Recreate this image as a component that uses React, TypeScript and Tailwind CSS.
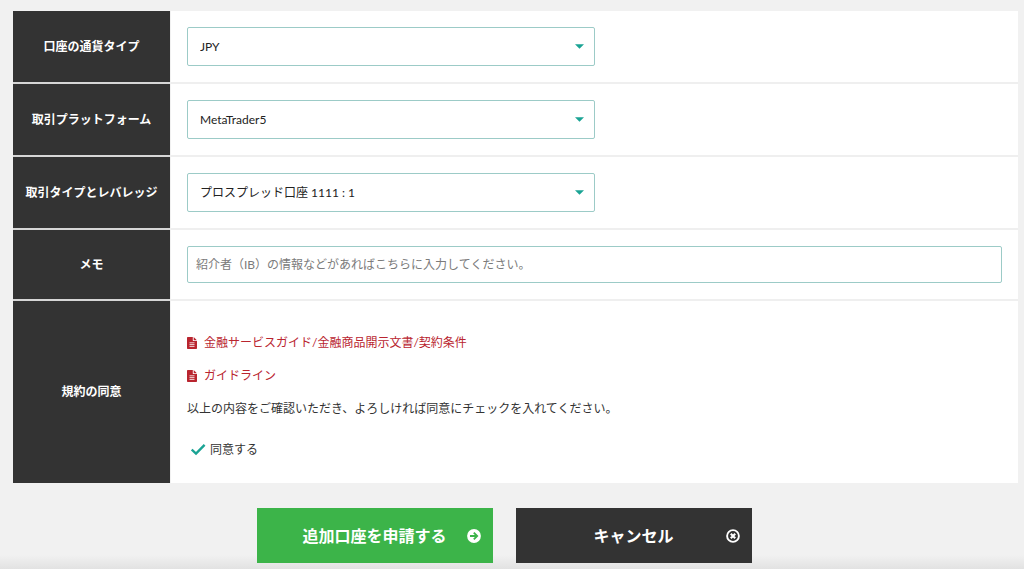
import { useState, type ReactNode } from "react";

type FormRowProps = {
  label: string;
  htmlFor?: string;
  children: ReactNode;
};

type SelectFieldProps = {
  id: string;
  options: string[];
};

const documents = [
  "金融サービスガイド/金融商品開示文書/契約条件",
  "ガイドライン",
];

function FormRow({ label, htmlFor, children }: FormRowProps) {
  return (
    <div className="flex gap-px">
      <div className="flex w-[157px] shrink-0 items-center justify-center bg-[#333333] text-center font-bold text-white">
        <label htmlFor={htmlFor}>{label}</label>
      </div>
      <div className="min-w-0 flex-1 bg-white px-4">{children}</div>
    </div>
  );
}

function Divider() {
  return (
    <div className="flex h-0.5 gap-px">
      <div className="w-[157px] shrink-0 bg-[#d6d6d6]" />
      <div className="flex-1 bg-[#efefef]" />
    </div>
  );
}

function SelectField({ id, options }: SelectFieldProps) {
  return (
    <div className="relative my-4 w-full max-w-[408px]">
      <select
        id={id}
        className="block h-[39px] w-full appearance-none rounded-xs border border-[#9ccbc7] bg-white px-3 text-[#222222] outline-none"
      >
        {options.map((option) => (
          <option key={option}>{option}</option>
        ))}
      </select>
      <svg
        viewBox="0 0 10 5"
        className="pointer-events-none absolute top-[17px] right-[11px] h-[5px] w-[9px] fill-[#1aa394]"
      >
        <path d="M0 0h10L5 5z" />
      </svg>
    </div>
  );
}

function DocumentIcon() {
  return (
    <svg viewBox="0 0 10 12" className="h-3 w-[10px] shrink-0">
      <path
        fill="#b9252f"
        d="M.7 0H5.8v3.4c0 .4.3.7.7.7H10v7.2c0 .4-.3.7-.7.7H.7c-.4 0-.7-.3-.7-.7V.7C0 .3.3 0 .7 0zM6.7.1l3.2 3.1H6.7z"
      />
      <path
        stroke="#fff"
        strokeOpacity=".8"
        d="M2.5 5.8h5M2.5 7.6h5M2.5 9.4h5"
      />
    </svg>
  );
}

function ArrowCircleIcon() {
  return (
    <svg viewBox="0 0 14 14" className="absolute right-3 size-[14px]">
      <circle cx="7" cy="7" r="6.9" fill="#fff" />
      <path
        d="M3 7h7M6.8 3.6 10.2 7l-3.4 3.4"
        fill="none"
        stroke="#3cb449"
        strokeWidth="1.8"
      />
    </svg>
  );
}

function CloseCircleIcon() {
  return (
    <svg
      viewBox="0 0 14 14"
      className="absolute right-3 size-[14px]"
      fill="none"
      stroke="#fff"
    >
      <circle cx="7" cy="7" r="5.9" strokeWidth="1.9" />
      <path d="m4.8 4.8 4.4 4.4M9.2 4.8 4.8 9.2" strokeWidth="2.2" />
    </svg>
  );
}

export default function App() {
  const [agreed, setAgreed] = useState(true);

  return (
    <main className="min-h-screen bg-[linear-gradient(to_top,#e2e2e2,#f1f1f1_14px)] pt-[11px] pr-[6px] pb-[5px] pl-[13px] font-[Lato,'Noto_Sans_CJK_JP',sans-serif] text-xs text-[#333333]">
      <form onSubmit={(event) => event.preventDefault()}>
        <FormRow label="口座の通貨タイプ" htmlFor="currency">
          <SelectField id="currency" options={["JPY"]} />
        </FormRow>
        <Divider />
        <FormRow label="取引プラットフォーム" htmlFor="platform">
          <SelectField id="platform" options={["MetaTrader5"]} />
        </FormRow>
        <Divider />
        <FormRow label="取引タイプとレバレッジ" htmlFor="leverage">
          <SelectField id="leverage" options={["プロスプレッド口座 1111 : 1"]} />
        </FormRow>
        <Divider />
        <FormRow label="メモ" htmlFor="memo">
          <input
            id="memo"
            type="text"
            placeholder="紹介者（IB）の情報などがあればこちらに入力してください。"
            className="my-4 block h-[37px] w-full rounded-xs border border-[#9ccbc7] bg-white px-2 outline-none placeholder:text-[#7b7b7b]"
          />
        </FormRow>
        <Divider />
        <FormRow label="規約の同意" htmlFor="agree">
          <div className="pt-8 pb-[23px] leading-5">
            <div className="flex flex-col items-start gap-[13px]">
              {documents.map((name) => (
                <a
                  key={name}
                  href="#"
                  className="flex items-center gap-[7px] text-[#b9252f]"
                >
                  <DocumentIcon />
                  {name}
                </a>
              ))}
              <p>
                以上の内容をご確認いただき、よろしければ同意にチェックを入れてください。
              </p>
            </div>
            <label
              htmlFor="agree"
              className="mt-[21px] flex w-fit items-center gap-1 pl-1"
            >
              <span className="relative flex h-3 w-[15px]">
                <input
                  id="agree"
                  type="checkbox"
                  checked={agreed}
                  onChange={(event) => setAgreed(event.target.checked)}
                  className="h-3 w-[15px] appearance-none"
                />
                {agreed && (
                  <svg
                    viewBox="0 0 15 12"
                    className="pointer-events-none absolute inset-0"
                  >
                    <path
                      d="M.7 5.6 5 9.6 13.6.9"
                      fill="none"
                      stroke="#1aa394"
                      strokeWidth="2.4"
                    />
                  </svg>
                )}
              </span>
              同意する
            </label>
          </div>
        </FormRow>

        <div className="mt-[25px] flex justify-center gap-[23px] pr-[23px] text-base font-bold text-white">
          <button
            type="submit"
            className="relative flex h-[55px] w-[236px] items-center justify-center bg-[#3cb449]"
          >
            追加口座を申請する
            <ArrowCircleIcon />
          </button>
          <button
            type="button"
            className="relative flex h-[55px] w-[236px] items-center justify-center bg-[#333333]"
          >
            キャンセル
            <CloseCircleIcon />
          </button>
        </div>
      </form>
    </main>
  );
}
